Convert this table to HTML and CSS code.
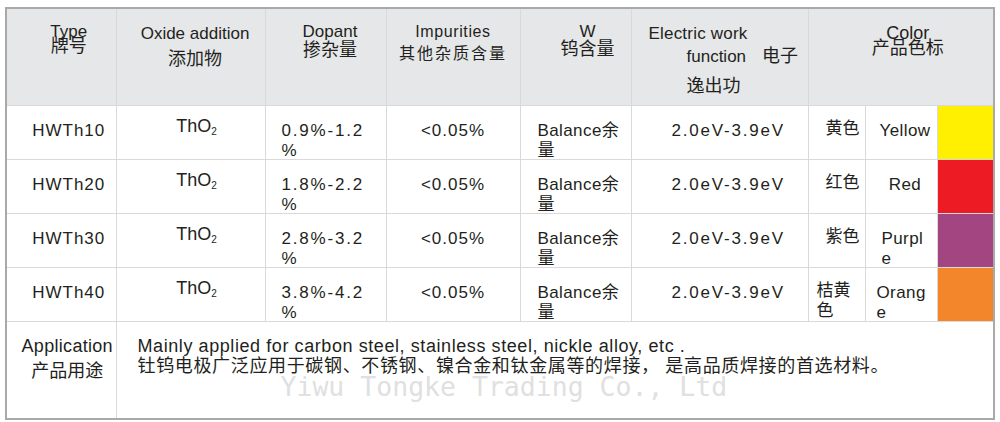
FILE: index.html
```html
<!DOCTYPE html>
<html lang="zh">
<head>
<meta charset="utf-8">
<title>Thoriated Tungsten Electrodes</title>
<link rel="stylesheet" href="styles.css">
</head>
<body>
<table class="spec">
  <colgroup>
    <col class="c-type"><col class="c-oxide"><col class="c-dopant"><col class="c-imp"><col class="c-w"><col class="c-ewf"><col class="c-zh"><col class="c-en"><col class="c-sw">
  </colgroup>
  <thead>
    <tr class="head">
      <th class="h-type"><span class="en">Type</span><span class="zh">牌号</span></th>
      <th class="h-oxide"><span class="en">Oxide addition</span><span class="zh">添加物</span></th>
      <th class="h-dopant"><span class="en">Dopant</span><span class="zh">掺杂量</span></th>
      <th class="h-imp"><span class="en">Impurities</span><span class="zh">其他杂质含量</span></th>
      <th class="h-w"><span class="en">W</span><span class="zh">钨含量</span></th>
      <th class="h-ewf"><span class="en">Electric work</span><span class="en2">function<span class="gap">电子</span></span><span class="zh">逸出功</span></th>
      <th class="h-color" colspan="3"><span class="en">Color</span><span class="zh">产品色标</span></th>
    </tr>
  </thead>
  <tbody>
    <tr class="row">
      <td class="type">HWTh10</td>
      <td class="oxide">ThO<span class="sub">2</span></td>
      <td class="dopant"><div class="stack">0.9%-1.2<br>%</div></td>
      <td class="imp">&lt;0.05%</td>
      <td class="w"><div class="stack">Balance余<br>量</div></td>
      <td class="ewf">2.0eV-3.9eV</td>
      <td class="czh">黄色</td>
      <td class="cen">Yellow</td>
      <td class="sw yellow"></td>
    </tr>
    <tr class="row">
      <td class="type">HWTh20</td>
      <td class="oxide">ThO<span class="sub">2</span></td>
      <td class="dopant"><div class="stack">1.8%-2.2<br>%</div></td>
      <td class="imp">&lt;0.05%</td>
      <td class="w"><div class="stack">Balance余<br>量</div></td>
      <td class="ewf">2.0eV-3.9eV</td>
      <td class="czh">红色</td>
      <td class="cen">Red</td>
      <td class="sw red"></td>
    </tr>
    <tr class="row">
      <td class="type">HWTh30</td>
      <td class="oxide">ThO<span class="sub">2</span></td>
      <td class="dopant"><div class="stack">2.8%-3.2<br>%</div></td>
      <td class="imp">&lt;0.05%</td>
      <td class="w"><div class="stack">Balance余<br>量</div></td>
      <td class="ewf">2.0eV-3.9eV</td>
      <td class="czh">紫色</td>
      <td class="cen cen-left"><div class="stack">Purpl<br>e</div></td>
      <td class="sw purple"></td>
    </tr>
    <tr class="row">
      <td class="type">HWTh40</td>
      <td class="oxide">ThO<span class="sub">2</span></td>
      <td class="dopant"><div class="stack">3.8%-4.2<br>%</div></td>
      <td class="imp">&lt;0.05%</td>
      <td class="w"><div class="stack">Balance余<br>量</div></td>
      <td class="ewf">2.0eV-3.9eV</td>
      <td class="czh czh-left"><div class="stack">桔黄<br>色</div></td>
      <td class="cen cen-left orange-t"><div class="stack">Orang<br>e</div></td>
      <td class="sw orange"></td>
    </tr>
    <tr class="app">
      <td class="app-label"><span class="en">Application</span><span class="zh">产品用途</span></td>
      <td class="app-text" colspan="8">
        <p class="app-en">Mainly applied for carbon steel, stainless steel, nickle alloy, etc .</p>
        <p class="app-zh">钍钨电极广泛应用于碳钢、不锈钢、镍合金和钛金属等的焊接， 是高品质焊接的首选材料。</p>
        <span class="watermark">Yiwu Tongke Trading Co., Ltd</span>
      </td>
    </tr>
  </tbody>
</table>
</body>
</html>
```

FILE: styles.css
```css
html, body {
  margin: 0;
  padding: 0;
  background: #ffffff;
}

body {
  padding: 7px 0 0 5px;
  font-family: "Liberation Sans", "Noto Sans CJK SC", sans-serif;
  color: #231f20;
}

th, td {
  padding: 0;
  vertical-align: top;
  white-space: nowrap;
}

.spec {
  width: 988px;
  table-layout: fixed;
  border-collapse: collapse;
  border: 2px solid #a9a9a9;
}

.c-type { width: 110px; }
.c-oxide { width: 149px; }
.c-dopant { width: 121px; }
.c-imp { width: 134px; }
.c-w { width: 111px; }
.c-ewf { width: 177px; }
.c-zh { width: 57px; }
.c-en { width: 72px; }
.c-sw { width: 57px; }

.spec th,
.spec td {
  border: 1px solid #d9d9d9;
}

/* ---------- header ---------- */
.head th {
  height: 97px;
  box-sizing: border-box;
  background: #e6e7e8;
  font-weight: normal;
  text-align: center;
  padding-top: 15px;
}

.head .en,
.head .en2,
.head .zh {
  display: block;
}

.head .en,
.head .en2 {
  font-size: 17px;
  line-height: 15px;
}

.head .zh {
  font-size: 18px;
  line-height: 15px;
}

.h-type { padding-left: 15px; }
.h-type .zh { margin-top: 0; }

.head .h-oxide {
  padding-left: 9px;
  padding-top: 17px;
}
.h-oxide .zh { margin-top: 11px; }

.h-dopant { padding-left: 9px; }
.h-dopant .zh { margin-top: 4px; }

.h-imp .en {
  font-size: 16px;
  letter-spacing: 0.6px;
}
.h-imp .zh {
  font-size: 16px;
  letter-spacing: 2px;
  margin-top: 7px;
}

.head .h-w { padding-left: 24px; }
.h-w .zh { margin-top: 3px; }

.head .h-ewf {
  text-align: left;
  padding-left: 17px;
  padding-top: 17px;
}
.h-ewf .en { letter-spacing: 0.2px; }
.h-ewf .en2 {
  margin-top: 8px;
  padding-left: 38px;
}
.h-ewf .gap {
  font-size: 18px;
  margin-left: 16px;
}
.h-ewf .zh {
  margin-top: 15px;
  padding-left: 38px;
}

.head .h-color {
  padding-left: 14px;
  padding-top: 17px;
}
.h-color .en { font-size: 18px; }
.h-color .zh { margin-top: 0; }

/* ---------- body rows ---------- */
.row td {
  height: 54px;
  box-sizing: border-box;
  padding-top: 15px;
  font-size: 17px;
  line-height: 20px;
}

.stack {
  margin-bottom: -5px;
}

.type {
  text-align: center;
  padding-left: 15px;
  letter-spacing: 1px;
}

.row .oxide {
  text-align: center;
  padding-left: 12px;
  padding-top: 10px;
  font-size: 18px;
}

.sub {
  font-size: 10px;
  line-height: 0;
  vertical-align: -3px;
}

.dopant {
  padding-left: 16px;
  letter-spacing: 1.8px;
}

.imp {
  text-align: center;
  letter-spacing: 1px;
}

.w {
  padding-left: 17px;
  letter-spacing: 0.4px;
}

.ewf {
  padding-left: 40px;
  letter-spacing: 1.8px;
}

.row .czh {
  text-align: right;
  padding-right: 5px;
  padding-top: 13px;
}

.row .czh-left {
  text-align: left;
  padding-left: 8px;
  padding-right: 0;
}

.cen {
  text-align: center;
  padding-left: 8px;
  letter-spacing: 0.4px;
}

.row .cen-left {
  text-align: left;
  padding-left: 16px;
}

.row .orange-t { padding-left: 11px; }

.sw { padding: 0; }
.yellow { background: #ffef00; }
.red { background: #ed1c24; }
.purple { background: #a24580; }
.orange { background: #f3862a; }

/* ---------- application row ---------- */
.app td {
  height: 98px;
  box-sizing: border-box;
}

.app-label {
  text-align: center;
  padding-left: 12px;
  padding-top: 14px;
}

.app-label .en {
  display: block;
  font-size: 18px;
  line-height: 20px;
  letter-spacing: 0.3px;
}

.app-label .zh {
  display: block;
  font-size: 18px;
  line-height: 20px;
  margin-top: 5px;
}

.app-text {
  position: relative;
  padding: 14px 0 0 21px;
}

.app-en,
.app-zh {
  margin: 0;
  line-height: 20px;
}

.app-en {
  font-size: 18px;
  letter-spacing: 0.58px;
}

.app-zh {
  font-size: 18px;
  letter-spacing: 0.65px;
  margin-top: 0;
}

.watermark {
  position: absolute;
  left: 164px;
  top: 52px;
  font-family: "DejaVu Sans Mono", monospace;
  font-size: 26.5px;
  line-height: 26px;
  color: #e0e0e0;
  white-space: nowrap;
  pointer-events: none;
}
```
